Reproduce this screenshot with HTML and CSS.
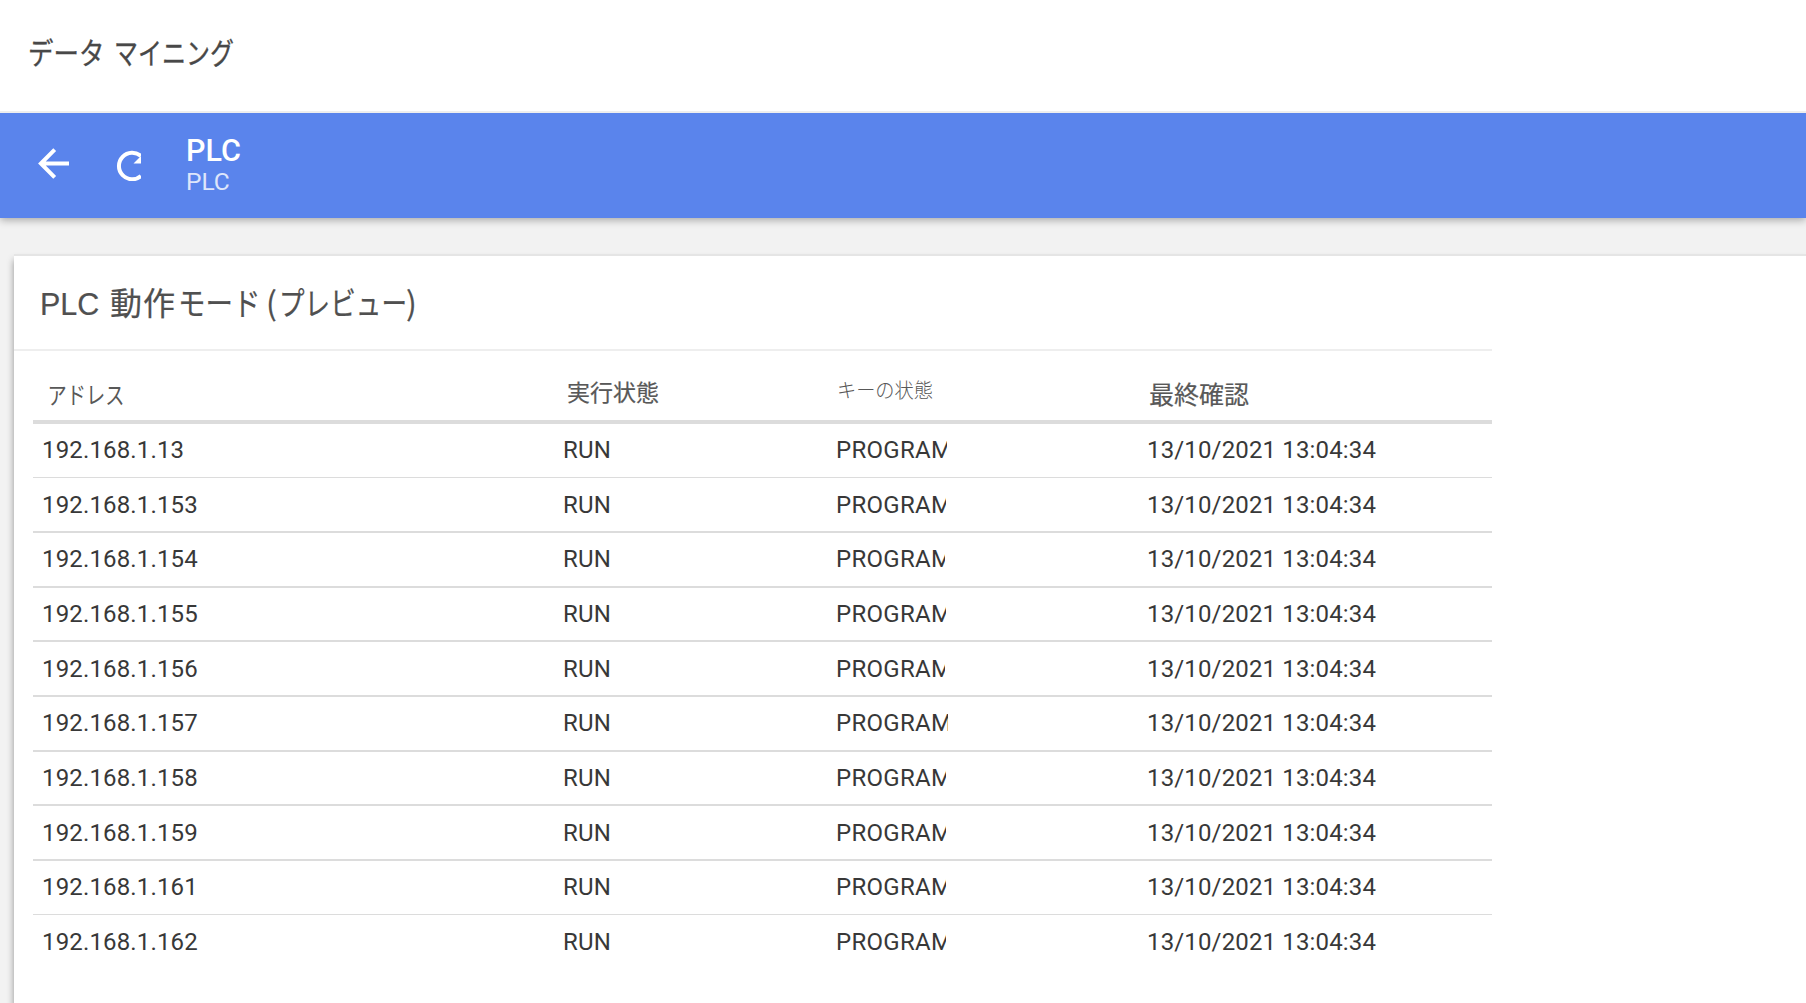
FILE: index.html
```html
<!DOCTYPE html>
<html lang="ja">
<head>
<meta charset="utf-8">
<title>データ マイニング</title>
<link rel="stylesheet" href="styles.css">
</head>
<body>
<header class="page-header"><h1><span class="w1">データ</span><span class="w2">マイニング</span></h1></header>
<div class="toolbar">
  <svg class="back" viewBox="0 0 32 32" width="32" height="32"><path d="M31 15.500H4M16.700 1.700 2.900 15.500l13.800 13.800" fill="none" stroke="#fff" stroke-width="4"/></svg>
  <svg class="refresh" viewBox="0 0 25 32" width="25" height="32"><path d="M25 7A13.300 13.300 0 1 0 25 27" fill="none" stroke="#fff" stroke-width="4"/><path d="M25 7V14.500H17.500z" fill="#fff"/></svg>
  <div class="names"><strong>PLC</strong><span>PLC</span></div>
</div>
<main class="content">
  <section class="card">
    <h2><span class="t1">PLC</span><span class="t2">動作</span><span class="t3">モード</span><span class="t4">(</span><span class="t5">プレビュー</span><span class="t6">)</span></h2>
    <div class="table">
      <div class="row head"><div class="h1">アドレス</div><div class="h2">実行状態</div><div class="h3">キーの状態</div><div class="h4">最終確認</div></div>
      <div class="row thin first"><div>192.168.1.13</div><div>RUN</div><div><span class="key k1">PROGRAM</span></div><div>13/10/2021 13:04:34</div></div>
      <div class="row second low"><div>192.168.1.153</div><div>RUN</div><div><span class="key">PROGRAM</span></div><div>13/10/2021 13:04:34</div></div>
      <div class="row"><div>192.168.1.154</div><div>RUN</div><div><span class="key k0">PROGRAM</span></div><div>13/10/2021 13:04:34</div></div>
      <div class="row"><div>192.168.1.155</div><div>RUN</div><div><span class="key">PROGRAM</span></div><div>13/10/2021 13:04:34</div></div>
      <div class="row low"><div>192.168.1.156</div><div>RUN</div><div><span class="key k0">PROGRAM</span></div><div>13/10/2021 13:04:34</div></div>
      <div class="row"><div>192.168.1.157</div><div>RUN</div><div><span class="key k2">PROGRAM</span></div><div>13/10/2021 13:04:34</div></div>
      <div class="row"><div>192.168.1.158</div><div>RUN</div><div><span class="key">PROGRAM</span></div><div>13/10/2021 13:04:34</div></div>
      <div class="row low"><div>192.168.1.159</div><div>RUN</div><div><span class="key">PROGRAM</span></div><div>13/10/2021 13:04:34</div></div>
      <div class="row thin"><div>192.168.1.161</div><div>RUN</div><div><span class="key">PROGRAM</span></div><div>13/10/2021 13:04:34</div></div>
      <div class="row last low"><div>192.168.1.162</div><div>RUN</div><div><span class="key">PROGRAM</span></div><div>13/10/2021 13:04:34</div></div>
    </div>
  </section>
</main>
</body>
</html>
```
FILE: styles.css
```css
* { box-sizing: border-box; }
body { margin: 0; height: 1003px; overflow: hidden; display: flex; flex-direction: column; background: #f2f2f2; font-family: Roboto, "Noto Sans CJK JP", sans-serif; color: #383838; }
h1, h2 { margin: 0; font-weight: 400; display: flex; white-space: nowrap; font-family: "Noto Sans CJK JP", sans-serif; }
h1 span, h2 span { flex: none; transform-origin: 0 50%; }
.page-header { flex: none; height: 113px; background: #fff; border-bottom: 2px solid #eee; padding: 27px 0 0 28px; }
h1 { font-size: 30px; line-height: 48px; color: #484848; -webkit-text-stroke: .3px #484848; }
.w1 { width: 86px; transform: scaleX(.85); }
.w2 { transform: scaleX(.8); }
.toolbar { flex: none; height: 105px; background: #5a84ec; display: flex; align-items: flex-start; padding: 35px 0 0 38px; clip-path: inset(0 0 -16px 0); box-shadow: 0 2px 8px rgba(0,0,0,.32); }
.refresh { margin: 1px 45px 0 46px; }
.names { margin-top: -14px; display: flex; flex-direction: column; color: #fff; }
.names strong { font-size: 30.500px; font-weight: 500; line-height: 34px; }
.names span { font-size: 24.500px; line-height: 28px; opacity: .8; }
.content { flex: 1; padding: 36px 0 0 14px; display: flex; }
.card { flex: 1; background: #fff; border-top: 2px solid #e5e5e5; box-shadow: 0 6px 7px rgba(0,0,0,.4); }
h2 { width: 1478px; height: 95px; border-bottom: 2px solid #eee; color: #505050; font-size: 32px; line-height: 91px; padding-left: 26px; -webkit-text-stroke: .2px #505050; }
.t1 { width: 70px; font-family: "Liberation Sans", sans-serif; font-size: 30.500px; line-height: 97px; }
.t2 { width: 68px; letter-spacing: 1px; }
.t3 { width: 88px; transform: scaleX(.86); }
.t4 { width: 13px; }
.t5 { width: 127px; transform: scaleX(.8); }
.table { width: 1459px; margin-left: 19px; }
.row { display: grid; grid-template-columns: 521px 273px 311px 1fr; padding-left: 9px; height: 54.600px; border-bottom: 2px solid #dcdcdc; font-size: 24px; line-height: 52px; letter-spacing: .15px; white-space: nowrap; }
.row.thin { border-bottom-width: 1px; }
.row.first { height: 54px; }
.row.second { height: 55.200px; }
.row.low { padding-top: 1px; }
.row.last { border: 0; }
.row.head { height: 73px; border-bottom: 4px solid #dcdcdc; line-height: 86px; letter-spacing: 0; color: #585858; font-family: "Noto Sans CJK JP", sans-serif; }
.row > div { transform-origin: 0 50%; }
.head .h1 { padding-left: 7px; transform: scaleX(.8); }
.head .h2 { padding-left: 4px; font-size: 23px; line-height: 81px; -webkit-text-stroke: .2px #585858; }
.head .h3 { padding-left: 1px; font-size: 20px; font-weight: 300; line-height: 78px; transform: scaleX(.96); }
.head .h4 { padding-left: 2px; font-size: 25px; line-height: 85px; -webkit-text-stroke: .2px #585858; }
.key { display: block; width: 110px; overflow: hidden; letter-spacing: .3px; }
.k0 { width: 109px; }
.k1 { width: 111px; }
.k2 { width: 112px; }
```
